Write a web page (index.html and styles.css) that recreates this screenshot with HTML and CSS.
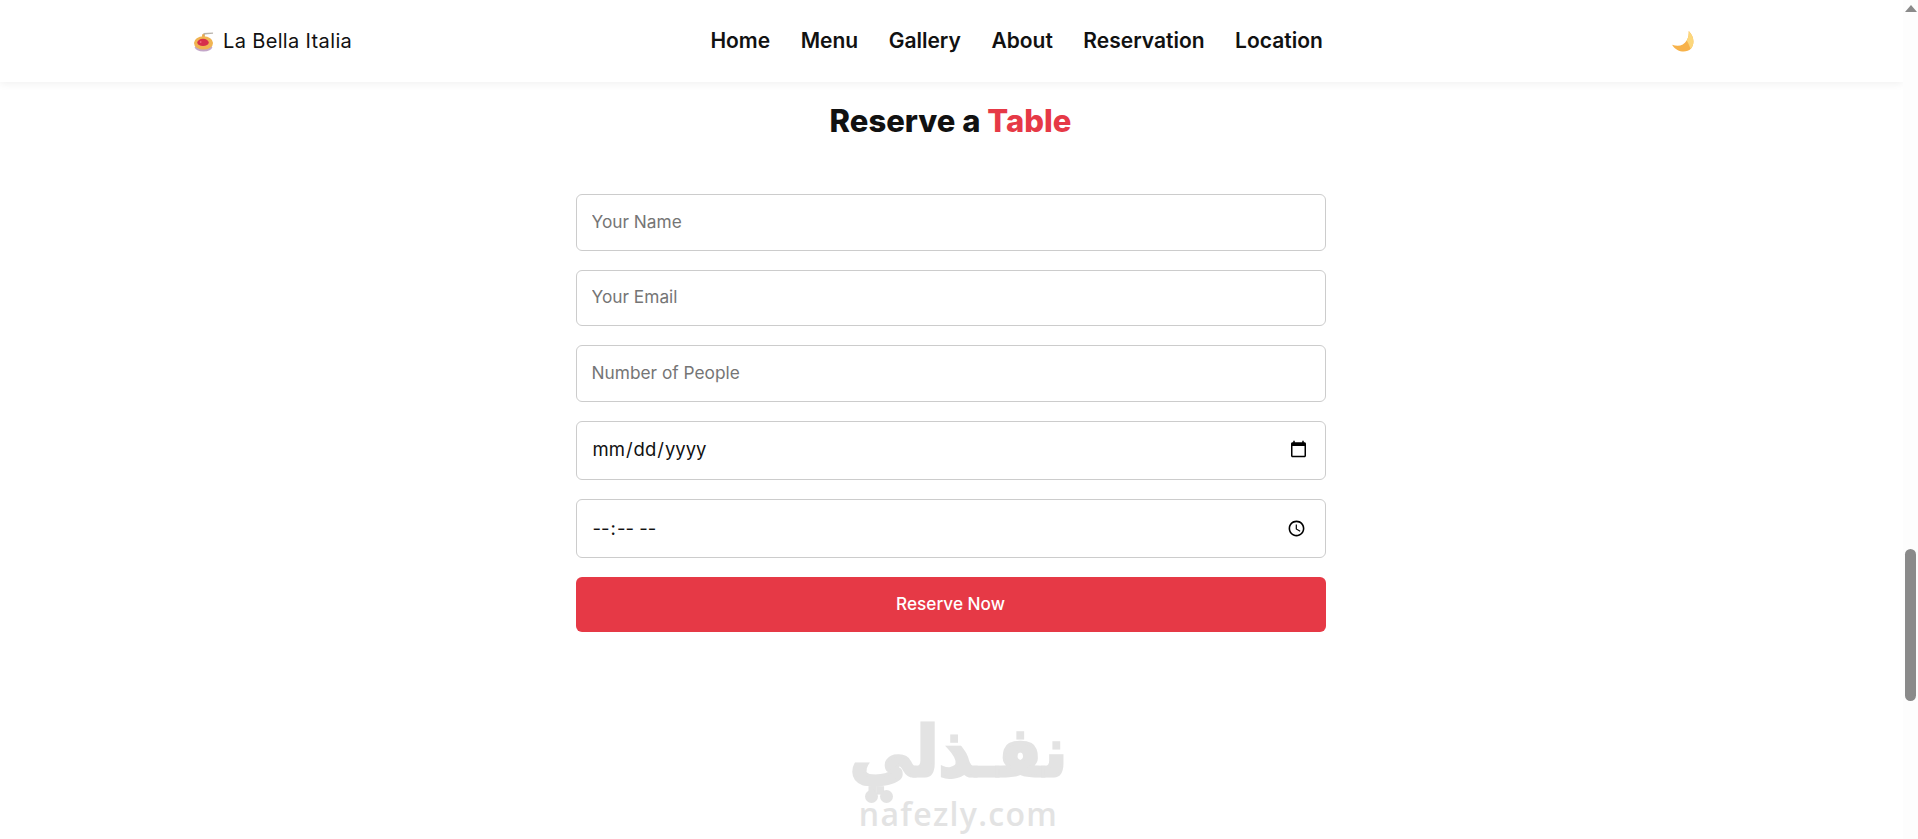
FILE: index.html
```html
<!DOCTYPE html>
<html lang="en">
<head>
<meta charset="utf-8">
<title>La Bella Italia</title>
<link rel="stylesheet" href="styles.css">
</head>
<body>
<div class="page">
  <header class="header">
    <a class="logo" href="#">
      <svg class="logo-icon" viewBox="0 0 22 22" aria-hidden="true">
        <path d="M10 7 L11 2 L21 1.6 L21 3 L12.6 3.6 L12 7z" fill="#b9b4ad"/>
        <path d="M9.6 3.5 L12 3.5 L12.3 7 L9.4 7z" fill="#e9a94c"/>
        <ellipse cx="11" cy="17" rx="9" ry="4.5" fill="#c3a6c9"/>
        <ellipse cx="11" cy="12.5" rx="10" ry="7" fill="#f0b452"/>
        <ellipse cx="10.5" cy="12" rx="6" ry="3.8" fill="#d62f4b"/>
        <circle cx="8" cy="11.5" r="1" fill="#f0647a"/>
      </svg>
      <span>La Bella Italia</span>
    </a>
    <nav class="nav">
      <a href="#">Home</a>
      <a href="#">Menu</a>
      <a href="#">Gallery</a>
      <a href="#">About</a>
      <a href="#">Reservation</a>
      <a href="#">Location</a>
    </nav>
    <button class="theme" type="button" aria-label="Toggle theme">
      <svg viewBox="0 0 22 22" aria-hidden="true">
        <path d="M17 1 C22 6 23 13 19 18 C15 22 6 22 1 14 C7 16 12 15 15 10 C17 7 17 4 17 1z" fill="#f7b24a"/>
        <path d="M17 1 C22 6 23 13 19 18 C18 17 18 15 15 10 C17 7 17 4 17 1z" fill="#fcd77c"/>
      </svg>
    </button>
  </header>
  <main class="main">
    <h2 class="title">Reserve a <span class="accent">Table</span></h2>
    <form class="form">
      <input class="field" type="text" placeholder="Your Name">
      <input class="field" type="email" placeholder="Your Email">
      <input class="field" type="number" placeholder="Number of People">
      <input class="field field-date" type="date">
      <input class="field field-time" type="time">
      <button class="submit" type="button">Reserve Now</button>
    </form>
    <div class="mark">
      <div class="mark-ar" lang="ar" dir="rtl">نفـذلي</div>
      <div class="mark-en">nafezly.com</div>
    </div>
  </main>
  <aside class="scrollbar" aria-hidden="true">
    <span class="arrow"></span>
    <span class="thumb"></span>
  </aside>
</div>
</body>
</html>
```
FILE: styles.css
```css
* { box-sizing: border-box; }
html, body { margin: 0; height: 100%; overflow: hidden; }
body { background: #fff; color: #111; font-family: "Inter", "Liberation Sans", sans-serif; }
.page { position: relative; height: 839px; padding-right: 15px; overflow: hidden; }

.header {
  height: 82px;
  padding: 0 208px 0 193px;
  display: flex;
  align-items: center;
  justify-content: space-between;
  background: #fff;
  box-shadow: 0 2px 8px rgba(0, 0, 0, 0.06);
}
.logo { display: flex; align-items: center; gap: 9px; color: #111; text-decoration: none; font-size: 20px; letter-spacing: 0.35px; }
.logo-icon { width: 21px; height: 21px; flex: none; }
.nav { display: flex; gap: 30.5px; margin: 0 0 2px 10px; }
.nav a { color: #111; text-decoration: none; font-size: 21px; font-weight: 600; }
.theme { width: 24px; height: 24px; padding: 0; border: 0; background: none; display: flex; align-items: center; justify-content: center; }
.theme svg { width: 23px; height: 23px; flex: none; }

.main { display: flex; flex-direction: column; align-items: center; padding-right: 2px; }
.title { margin: 19px 0 0; font-size: 31px; line-height: 39px; font-weight: 800; color: #111; }
.accent { color: #e63946; }

.form { width: 750px; margin-top: 54px; display: flex; flex-direction: column; gap: 19px; }
.field {
  width: 100%;
  height: 56.5px;
  padding: 0 15px 2px;
  border: 1px solid #ccc;
  border-radius: 6px;
  background: #fff;
  color: #111;
  font: 400 17.3px "Inter", "Liberation Sans", sans-serif;
  outline: none;
}
.field::placeholder { color: #757575; }
.field-date { height: 59px; font-size: 18.5px; }
.field-time { height: 59.5px; font-size: 18.5px; padding-bottom: 0; }
.submit {
  height: 55px;
  border: 0;
  border-radius: 6px;
  background: #e63946;
  color: #fff;
  font: 500 17.2px "Inter", "Liberation Sans", sans-serif;
  padding: 0 0 2px;
}

.mark { margin: 90px 0 0 16px; display: flex; flex-direction: column; align-items: center; color: #e3e3e3; }
.mark-ar { font: 700 64px/66px "DejaVu Sans", sans-serif; -webkit-text-stroke: 3px #e3e3e3; transform: scaleY(1.08); transform-origin: center bottom; }
.mark-en { position: relative; margin-top: 7px; font: 600 32px/38px "Open Sans", sans-serif; letter-spacing: 1.3px; }
.mark-en::before {
  content: "";
  position: absolute;
  left: 6px;
  top: -5px;
  width: 13px;
  height: 13px;
  border-radius: 50%;
  background: #e3e3e3;
  box-shadow: 15px 0 0 #e3e3e3;
}

.scrollbar { position: absolute; top: 0; right: 0; bottom: 0; width: 15px; background: #fdfdfd; }
.arrow { position: absolute; top: 5px; left: 2px; width: 0; height: 0; border-left: 6px solid transparent; border-right: 6px solid transparent; border-bottom: 7px solid #8a8a8a; }
.thumb { position: absolute; top: 549px; left: 2px; width: 11px; height: 152px; border-radius: 6px; background: #8a8a8a; }
```
